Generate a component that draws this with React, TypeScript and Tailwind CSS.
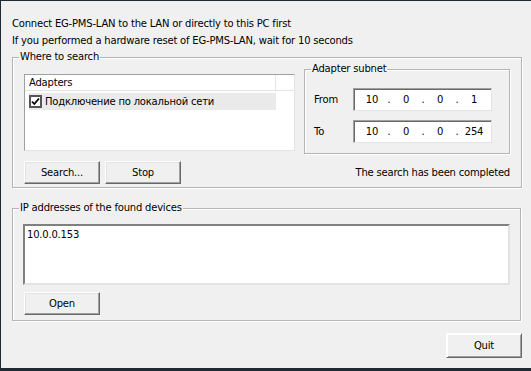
import React from "react"

const font = { fontFamily: '"DejaVu Sans", "Liberation Sans", sans-serif' }

function Button({ label, className = "" }: { label: string; className?: string }) {
  return (
    <div
      className={`flex h-[23px] w-[76px] items-center justify-center border border-t-white border-l-white border-r-[#696969] border-b-[#696969] bg-[#f0f0f0] shadow-[inset_-1px_-1px_0_#a0a0a0,inset_1px_1px_0_#e3e3e3] text-[10px] text-black ${className}`}
    >
      {label}
    </div>
  )
}

function Group({ title, className = "", inner = "", children }: { title: string; className?: string; inner?: string; children: React.ReactNode }) {
  return (
    <fieldset className={`border border-[#b4b4b4] p-0 shadow-[1px_1px_0_white,inset_1px_1px_0_white] ${className}`}>
      <legend className="ml-[6px] px-[1px] text-[10px] leading-[12px] text-black">{title}</legend>
      <div className={inner}>{children}</div>
    </fieldset>
  )
}

function IpBox({ parts }: { parts: string[] }) {
  return (
    <div className="flex h-[23px] w-[139px] items-center border border-t-[#a0a0a0] border-l-[#a0a0a0] border-r-[#e3e3e3] border-b-[#e3e3e3] bg-white pl-[8px] shadow-[inset_1px_1px_0_#696969] text-[10px]">
      {parts.map((p, i) => (
        <React.Fragment key={i}>
          <span className="w-[20px] text-center">{p}</span>
          {i < 3 && <span className="w-[14px] text-center">.</span>}
        </React.Fragment>
      ))}
    </div>
  )
}

export default function App() {
  return (
    <div className="relative h-[371px] w-[531px] overflow-hidden border-l border-t border-[#1f2a33] bg-[#f0f0f0] tracking-[-0.2px] text-black" style={font}>
      <div className="pl-[11px] pt-[14px] text-[10px] leading-[17px]">
        <div>Connect EG-PMS-LAN to the LAN or directly to this PC first</div>
        <div>If you performed a hardware reset of EG-PMS-LAN, wait for 10 seconds</div>
      </div>

      <Group title="Where to search" className="ml-[11px] mt-[2px] h-[137px] w-[509px]" inner="px-[11px]">
        <div className="flex items-start">
          <div className="mt-[11px] h-[77px] w-[271px] border border-t-[#a0a0a0] border-l-[#a0a0a0] border-r-[#e3e3e3] border-b-[#e3e3e3] bg-white">
            <div className="flex h-[16px] border-b border-[#e5e5e5] text-[10px]">
              <div className="w-[251px] border-r border-[#e5e5e5] pl-[4px] leading-[15px]">Adapters</div>
            </div>
            <div className="ml-[4px] mt-[2px] flex h-[17px] w-[247px] items-center bg-[#eaeaea] text-[10px]">
              <div className="flex h-[13px] w-[13px] items-center justify-center border-2 border-[#555] bg-white">
                <svg width="9" height="9" viewBox="0 0 9 9">
                  <path d="M1 4.5 L3.3 7 L8 1.5" stroke="black" strokeWidth="1.8" fill="none" />
                </svg>
              </div>
              <span className="ml-[3px]">Подключение по локальной сети</span>
            </div>
          </div>

          <Group title="Adapter subnet" className="ml-[9px] h-[91px] w-[206px]" inner="pl-[9px]">
            <div className="mt-[13px] flex items-center">
              <span className="w-[39px] text-[10px]">From</span>
              <IpBox parts={["10", "0", "0", "1"]} />
            </div>
            <div className="mt-[9px] flex items-center">
              <span className="w-[39px] text-[10px]">To</span>
              <IpBox parts={["10", "0", "0", "254"]} />
            </div>
          </Group>
        </div>

        <div className="mt-[7px] flex items-center">
          <Button label="Search..." />
          <Button label="Stop" className="ml-[5px]" />
          <span className="ml-auto text-[10px]">The search has been completed</span>
        </div>
      </Group>

      <Group title="IP addresses of the found devices" className="ml-[11px] mt-[14px] h-[119px] w-[509px]" inner="pl-[10px]">
        <div className="mt-[10px] h-[61px] w-[487px] border-2 border-t-[#808080] border-l-[#808080] border-r-[#e3e3e3] border-b-[#e3e3e3] bg-white px-[2px] pt-[1px] text-[10px]">
          10.0.0.153
        </div>
        <Button label="Open" className="mt-[7px] ml-[1px]" />
      </Group>

      <div className="mr-[9px] mt-[12px] flex justify-end">
        <Button
          label="Quit"
          className="h-[25px] w-[75px] border-[#555] shadow-[inset_1px_1px_0_white,inset_-1px_-1px_0_#a0a0a0]"
        />
      </div>

      <div className="absolute bottom-0 left-0 h-[3px] w-full bg-[#1f2a33]" />
    </div>
  )
}
